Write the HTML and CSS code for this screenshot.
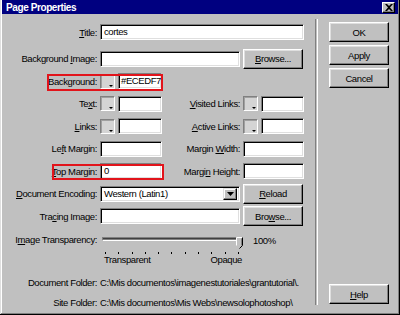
FILE: index.html
```html
<!DOCTYPE html>
<html>
  <head>
    <title>Page Properties</title>
    <link rel="stylesheet" href="styles.css">
  </head>
  <body>
    <div class="dialog">
      <div class="titlebar">
        <span class="caption">Page Properties</span>
        <span class="close">
          <svg width="8" height="7" viewBox="0 0 8 7"><path d="M0 0h2l2 2 2-2h2L5 3.5 8 7H6L4 5 2 7H0l3-3.5z" fill="#000"/></svg>
        </span>
      </div>
      <div class="content">
        <div class="form">
          <div class="row first">
            <span class="lbl"><u>T</u>itle:</span>
            <span class="input">cortes</span>
          </div>
          <div class="row">
            <span class="lbl">Background <u>I</u>mage:</span>
            <div class="with-btn">
              <span class="input"></span>
              <span class="btn"><u>B</u>rowse...</span>
            </div>
          </div>
          <div class="row">
            <span class="lbl">Background:</span>
            <div class="color">
              <span class="swatch"></span>
              <span class="input hex">#ECEDF7</span>
            </div>
            <span class="mark mark-bg"></span>
          </div>
          <div class="row">
            <span class="lbl">Te<u>x</u>t:</span>
            <div class="pair">
              <div class="color"><span class="swatch"></span><span class="input"></span></div>
              <span class="lbl"><u>V</u>isited Links:</span>
              <div class="color"><span class="swatch"></span><span class="input"></span></div>
            </div>
          </div>
          <div class="row">
            <span class="lbl"><u>L</u>inks:</span>
            <div class="pair">
              <div class="color"><span class="swatch"></span><span class="input"></span></div>
              <span class="lbl"><u>A</u>ctive Links:</span>
              <div class="color"><span class="swatch"></span><span class="input"></span></div>
            </div>
          </div>
          <div class="row">
            <span class="lbl">Le<u>f</u>t Margin:</span>
            <div class="pair">
              <span class="input"></span>
              <span class="lbl">Margin <u>W</u>idth:</span>
              <span class="input"></span>
            </div>
          </div>
          <div class="row">
            <span class="lbl"><u>T</u>op Margin:</span>
            <div class="pair">
              <span class="input">0</span>
              <span class="lbl">Margi<u>n</u> Height:</span>
              <span class="input"></span>
            </div>
            <span class="mark mark-top"></span>
          </div>
          <div class="row">
            <span class="lbl"><u>D</u>ocument Encoding:</span>
            <div class="with-btn">
              <span class="input select">
                <span class="value">Western (Latin1)</span>
                <span class="drop">
                  <svg width="7" height="4" viewBox="0 0 7 4"><path d="M0 0h7L3.5 4z" fill="#000"/></svg>
                </span>
              </span>
              <span class="btn"><u>R</u>eload</span>
            </div>
          </div>
          <div class="row">
            <span class="lbl">Tra<u>c</u>ing Image:</span>
            <div class="with-btn">
              <span class="input"></span>
              <span class="btn">Bro<u>w</u>se...</span>
            </div>
          </div>
          <div class="row slider-row">
            <span class="lbl">I<u>m</u>age Transparency:</span>
            <div class="slider-wrap">
              <div class="slider">
                <div class="track-area">
                  <div class="track"></div>
                  <svg class="thumb" width="7" height="12" viewBox="0 0 7 12">
                    <path d="M0.5 0.5h6v8l-3 3-3-3z" fill="#c0c0c0"/>
                    <path d="M0.5 8.5v-8h6" fill="none" stroke="#fff"/>
                    <path d="M6.5 0.5v8l-3 3" fill="none" stroke="#000"/>
                    <path d="M5.5 1.5v7" fill="none" stroke="#808080"/>
                  </svg>
                </div>
                <div class="ticks">
                  <i></i><i></i><i></i><i></i><i></i><i></i><i></i><i></i><i></i><i></i><i></i>
                </div>
                <div class="scale"><span>Transparent</span><span>Opaque</span></div>
              </div>
              <span class="pct">100%</span>
            </div>
          </div>
          <div class="info first-info">
            <span class="lbl">Document Folder:</span>
            <span class="path">C:\Mis documentos\imagenestutoriales\grantutorial\.</span>
          </div>
          <div class="info">
            <span class="lbl">Site Folder:</span>
            <span class="path">C:\Mis documentos\Mis Webs\newsolophotoshop\</span>
          </div>
        </div>
        <div class="sep"></div>
        <div class="buttons">
          <span class="btn default">OK</span>
          <span class="btn">Apply</span>
          <span class="btn">Cancel</span>
          <span class="btn help"><u>H</u>elp</span>
        </div>
      </div>
    </div>
  </body>
</html>
```

FILE: styles.css
```css
body {
  margin: 0;
  font-family: "Liberation Sans", Arial, sans-serif;
  font-size: 9.5px;
  letter-spacing: -0.4px;
  color: #000;
  background: #c0c0c0;
}
.dialog {
  display: flex;
  flex-direction: column;
  width: 400px;
  height: 315px;
  box-sizing: border-box;
  padding: 0 2px 3px 2px;
  background: #c0c0c0;
  box-shadow: inset -1px -1px #000, inset 1px 0 #dfdfdf, inset -2px -2px #808080, inset 2px 0 #fff;
}
.titlebar {
  display: flex;
  align-items: center;
  justify-content: space-between;
  height: 17px;
  padding: 0 3px 0 4px;
  background: #000080;
  color: #fff;
  font-size: 10px;
  font-weight: bold;
}
.close {
  display: flex;
  align-items: center;
  justify-content: center;
  width: 13px;
  height: 11px;
  box-sizing: border-box;
  background: #c0c0c0;
  border: 1px solid;
  border-color: #fff #000 #000 #fff;
  box-shadow: inset -1px -1px #808080;
}
.content {
  display: flex;
  flex-grow: 1;
  padding: 7px 0 0 8px;
}
.form {
  width: 294px;
}
.row {
  position: relative;
  display: grid;
  grid-template-columns: 87px 204px;
  column-gap: 3px;
  align-items: center;
  height: 22.5px;
}
.row.first {
  height: 22px;
  margin-bottom: 4.5px;
}
.lbl {
  text-align: right;
  white-space: nowrap;
}
.input {
  display: block;
  height: 16px;
  box-sizing: border-box;
  padding-left: 3px;
  line-height: 14px;
  background: #fff;
  border: 1px solid;
  border-color: #808080 #fff #fff #808080;
  box-shadow: inset 1px 1px #000, inset -1px -1px #dfdfdf;
  white-space: nowrap;
  overflow: hidden;
}
.btn {
  display: flex;
  align-items: center;
  justify-content: center;
  height: 20px;
  box-sizing: border-box;
  background: #c0c0c0;
  border: 1px solid;
  border-color: #fff #000 #000 #fff;
  box-shadow: inset -1px -1px #808080, inset 1px 1px #dfdfdf;
}
.with-btn {
  display: grid;
  grid-template-columns: 140px 60px;
  column-gap: 3px;
  align-items: center;
}
.color {
  display: flex;
  align-items: center;
  gap: 3px;
}
.color .input {
  flex-grow: 1;
}
.color .hex {
  flex-grow: 0;
  width: 44px;
  padding-left: 2px;
}
.swatch {
  position: relative;
  flex-shrink: 0;
  width: 15px;
  height: 15px;
  box-sizing: border-box;
  background: #d4d4d4;
  border: 1px solid;
  border-color: #808080 #fff #fff #808080;
  box-shadow: inset 1px 1px #a0a0a0;
}
.swatch::after {
  content: "";
  position: absolute;
  right: 1px;
  bottom: 1px;
  border-left: 2px solid transparent;
  border-right: 2px solid transparent;
  border-top: 2px solid #000;
}
.pair {
  display: grid;
  grid-template-columns: 62px 75px 61px;
  column-gap: 3px;
  align-items: center;
}
.mark {
  position: absolute;
  box-sizing: border-box;
  border: 2px solid #e2141b;
}
.mark-bg {
  left: 37px;
  top: 4px;
  width: 116px;
  height: 17px;
}
.mark-top {
  left: 42px;
  top: 4px;
  width: 112px;
  height: 16px;
}
.select {
  display: flex;
  align-items: center;
  justify-content: space-between;
  padding-right: 2px;
}
.drop {
  display: flex;
  align-items: center;
  justify-content: center;
  width: 14px;
  height: 12px;
  box-sizing: border-box;
  background: #c0c0c0;
  border: 1px solid;
  border-color: #dfdfdf #000 #000 #dfdfdf;
  box-shadow: inset -1px -1px #808080, inset 1px 1px #fff;
}
.slider-row {
  height: auto;
  align-items: start;
  padding-top: 5px;
}
.slider-row .lbl {
  line-height: 13px;
}
.slider-wrap {
  display: grid;
  grid-template-columns: 146px auto;
  align-items: start;
}
.track-area {
  position: relative;
  height: 12px;
}
.track {
  height: 4px;
  margin: 4px 6px 0 2px;
  box-sizing: border-box;
  border: 1px solid;
  border-color: #808080 #fff #fff #808080;
  background: #808080;
  box-shadow: inset 0 1px #404040;
}
.thumb {
  position: absolute;
  left: 136px;
  top: 0;
}
.ticks {
  display: flex;
  justify-content: space-between;
  margin: 3px 7px 0 5px;
}
.ticks i {
  width: 1px;
  height: 2px;
  background: #000;
}
.scale {
  display: flex;
  justify-content: space-between;
  margin-top: 1px;
  padding: 0 4px;
  line-height: 10px;
}
.pct {
  padding: 1px 0 0 7px;
  line-height: 13px;
}
.info {
  display: grid;
  grid-template-columns: 87px auto;
  column-gap: 3px;
  align-items: center;
  height: 20px;
}
.first-info {
  margin-top: 7.5px;
}
.path {
  white-space: nowrap;
}
.sep {
  width: 1px;
  margin: -2px 0 7px 11px;
  border-left: 1px solid #808080;
  border-right: 1px solid #fff;
}
.buttons {
  display: flex;
  flex-direction: column;
  gap: 3px;
  width: 60px;
  margin-left: 11px;
  padding: 1px 0 8px;
}
.help {
  margin-top: auto;
}
```
